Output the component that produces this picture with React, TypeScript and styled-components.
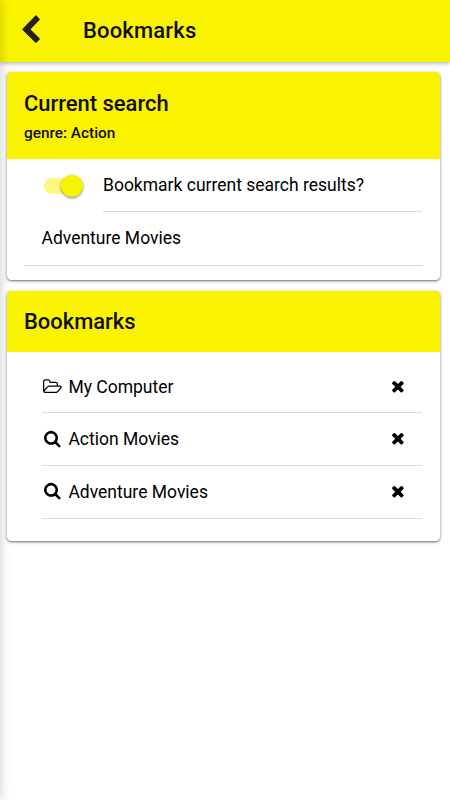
import React from "react";
import styled, { createGlobalStyle } from "styled-components";

const YELLOW = "#faf300";

const GlobalStyle = createGlobalStyle`
  * { box-sizing: border-box; }
  body { margin: 0; background: #fff; font-family: Roboto, "Liberation Sans", sans-serif; color: #000; }
  h1, h2, p, ul { margin: 0; padding: 0; }
`;

const Page = styled.div`
  position: relative;
  height: 800px;
  overflow: hidden;
  background: #fff;
`;

const EdgeShadow = styled.div`
  position: absolute;
  z-index: 2;
  top: 0;
  bottom: 0;
  left: -10px;
  width: 10px;
  box-shadow: 0 0 11px rgba(0, 0, 0, 0.22);
`;

const Toolbar = styled.header`
  position: relative;
  z-index: 1;
  display: flex;
  align-items: center;
  height: 61.6px;
  background: ${YELLOW};
  box-shadow: 0 1px 5px rgba(0, 0, 0, 0.35);
`;

const BackButton = styled.button`
  display: flex;
  width: 20px;
  height: 30px;
  margin: 0 42.2px 3px 20.8px;
  padding: 0;
  border: 0;
  background: none;
`;

const PageTitle = styled.h1`
  padding-top: 1px;
  font-size: 21.95px;
  line-height: 30px;
  font-weight: 500;
  letter-spacing: 0.2px;
  color: #110e21;
`;

const Content = styled.main`
  position: relative;
  z-index: 3;
  display: flex;
  flex-direction: column;
  gap: 11px;
  padding: 10.8px 10.2px 0 7px;
`;

const Card = styled.section<{ $height: number }>`
  height: ${(p) => p.$height}px;
  border-radius: 4.4px;
  background: #fff;
  box-shadow: 0 1px 2px rgba(0, 0, 0, 0.45), 0 1px 4px rgba(0, 0, 0, 0.2);
`;

const CardHeader = styled.div<{ $height: number }>`
  height: ${(p) => p.$height}px;
  padding: 17.2px 17px 0;
  border-radius: 4px 4px 0 0;
  background: ${YELLOW};
  color: #110e21;
`;

const CardTitle = styled.h2`
  font-size: 21.95px;
  line-height: 27px;
  font-weight: 500;
  letter-spacing: 0;
`;

const CardSubtitle = styled.p`
  margin-top: 5px;
  font-size: 15.37px;
  line-height: 22px;
  font-weight: 500;
  letter-spacing: 0;
`;

const ToggleRow = styled.div`
  display: flex;
  height: 52.6px;
  padding: 0 17.5px 0 37px;
`;

const Track = styled.div`
  display: flex;
  align-items: center;
  justify-content: flex-end;
  width: 39px;
  height: 15.4px;
  margin-top: 19px;
  border-radius: 8px;
  background: rgba(250, 243, 0, 0.5);
`;

const Thumb = styled.div`
  flex: none;
  width: 22px;
  height: 22px;
  border-radius: 50%;
  background: ${YELLOW};
  box-shadow: 0 1px 3px rgba(0, 0, 0, 0.4), 0 1px 1px rgba(0, 0, 0, 0.12);
`;

const ToggleLabel = styled.label`
  flex: 1;
  margin-left: 20px;
  border-bottom: 1px solid #d9d9d9;
  font-size: 17.5px;
  line-height: 52px;
`;

const NameField = styled.div`
  height: 53.6px;
  margin: 0 17px;
  padding-left: 17.5px;
  border-bottom: 1px solid #d9d9d9;
  font-size: 17.5px;
  line-height: 52px;
`;

const List = styled.ul`
  padding: 8.8px 17.5px 0 34.6px;
  list-style: none;
`;

const Row = styled.li`
  display: flex;
  align-items: center;
  height: 52.6px;
  border-bottom: 1px solid #d9d9d9;
  font-size: 17.5px;
`;

const RowIcon = styled.span<{ $inset: number }>`
  display: flex;
  width: 26.8px;
  padding: 0 0 1px ${(p) => p.$inset}px;
`;

const RowLabel = styled.span`
  flex: 1;
`;

const RemoveButton = styled.button`
  display: flex;
  margin-right: 17.2px;
  padding: 0;
  border: 0;
  background: none;
`;

const SEARCH =
  "M1152 832q0-185-131.5-316.5T704 384 387.5 515.5 256 832t131.5 316.5T704 1280t316.5-131.5T1152 832zm512 832q0 52-38 90t-90 38q-54 0-90-38l-343-342q-179 124-399 124-143 0-273.5-55.5t-225-150T55.5 1105.5 0 832t55.5-273.5 150-225 225-150T704 128t273.5 55.5 225 150 150 225T1408 832q0 220-124 399l343 343q37 37 37 90z";
const FOLDER =
  "M1781 1099q0-35-53-35H640q-40 0-85.5 21.5T484 1137l-294 363q-18 24-18 40 0 35 53 35h1088q40 0 86-22t71-53l294-363q18-22 18-39zM640 936h768V776q0-40-28-68t-68-28H736q-40 0-68-28t-28-68v-64q0-40-28-68t-68-28H224q-40 0-68 28t-28 68v853l256-315q44-53 116-87.5T640 936zm1269 163q0 62-46 120l-295 363q-43 53-116 87.5t-140 34.5H224q-92 0-158-66T0 1480V520q0-92 66-158t158-66h320q92 0 158 66t66 158v32h544q92 0 158 66t66 158v160h192q54 0 99 24.5t67 70.5q15 32 15 68z";
const CROSS =
  "M1298 1322q0 40-28 68l-136 136q-28 28-68 28t-68-28l-294-294-294 294q-28 28-68 28t-68-28L138 1390q-28-28-28-68t28-68l294-294-294-294q-28-28-28-68t28-68l136-136q28-28 68-28t68 28l294 294 294-294q28-28 68-28t68 28l136 136q28 28 28 68t-28 68L976 960l294 294q28 28 28 68z";

const bookmarks = [
  { label: "My Computer", kind: "folder" },
  { label: "Action Movies", kind: "search" },
  { label: "Adventure Movies", kind: "search" },
];

function BookmarkIcon({ kind }: { kind: string }) {
  return kind === "folder" ? (
    <RowIcon $inset={1.5}>
      <svg width="18.8" height="17.56" viewBox="0 64 1920 1792"><path d={FOLDER} /></svg>
    </RowIcon>
  ) : (
    <RowIcon $inset={2.8}>
      <svg width="16.6" height="17.8" viewBox="0 40 1664 1792"><path d={SEARCH} /></svg>
    </RowIcon>
  );
}

export default function App() {
  return (
    <>
      <GlobalStyle />
      <Page>
        <EdgeShadow />
        <Toolbar>
          <BackButton aria-label="Back">
            <svg width="20" height="30" viewBox="0 0 20 30">
              <path
                d="M14.9 2 L18.3 5.4 L8.7 15.4 L18.3 25 L14.9 28.3 L1.8 15.4 Z"
                fill="#222"
                stroke="#222"
                strokeWidth="1.2"
                strokeLinejoin="round"
              />
            </svg>
          </BackButton>
          <PageTitle>Bookmarks</PageTitle>
        </Toolbar>
        <Content>
          <Card $height={207.8}>
            <CardHeader $height={87}>
              <CardTitle>Current search</CardTitle>
              <CardSubtitle>genre: Action</CardSubtitle>
            </CardHeader>
            <ToggleRow>
              <Track role="switch" aria-checked="true"><Thumb /></Track>
              <ToggleLabel>Bookmark current search results?</ToggleLabel>
            </ToggleRow>
            <NameField>Adventure Movies</NameField>
          </Card>
          <Card $height={250.2}>
            <CardHeader $height={60.8}>
              <CardTitle>Bookmarks</CardTitle>
            </CardHeader>
            <List>
              {bookmarks.map((b) => (
                <Row key={b.label}>
                  <BookmarkIcon kind={b.kind} />
                  <RowLabel>{b.label}</RowLabel>
                  <RemoveButton aria-label="Remove">
                    <svg width="13.8" height="17.56" viewBox="0 64 1408 1792"><path d={CROSS} /></svg>
                  </RemoveButton>
                </Row>
              ))}
            </List>
          </Card>
        </Content>
      </Page>
    </>
  );
}
